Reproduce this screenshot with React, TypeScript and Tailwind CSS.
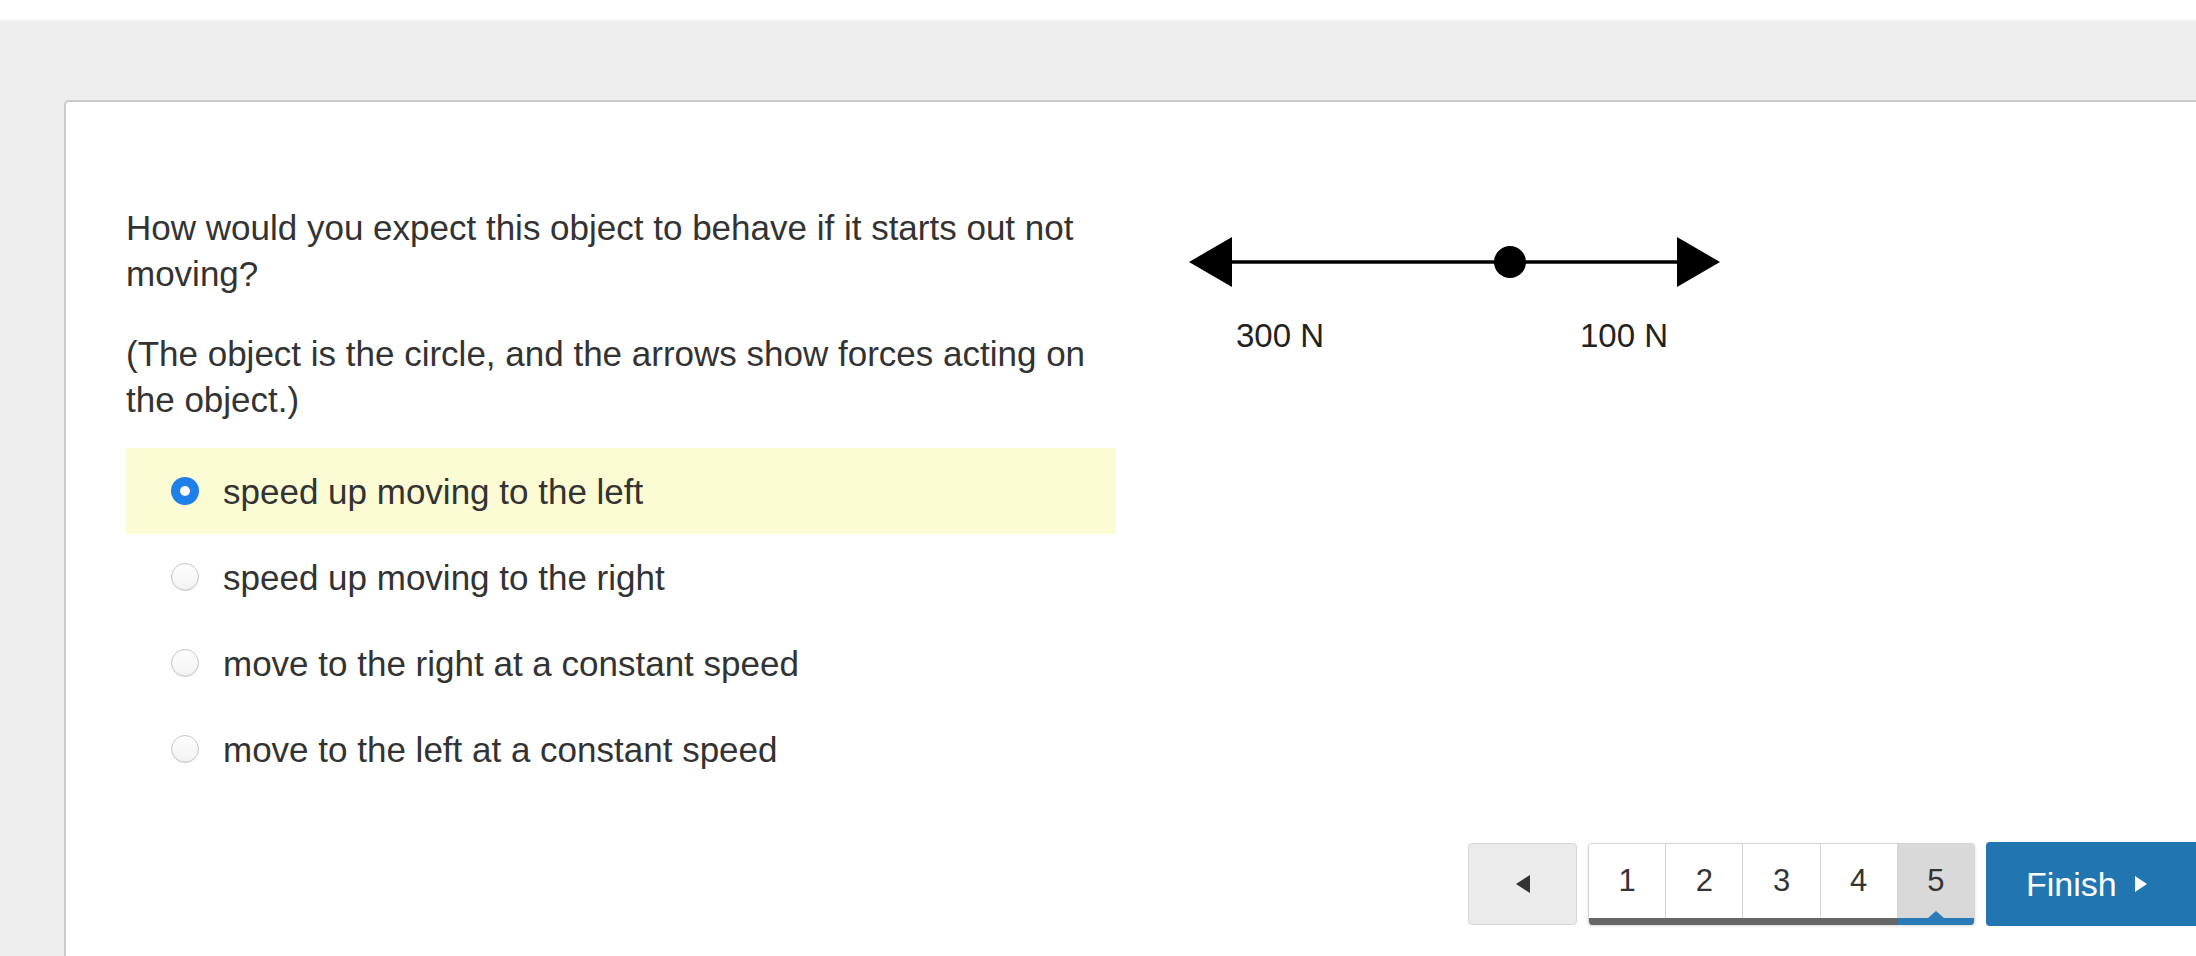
import React from "react";

const options = [
  "speed up moving to the left",
  "speed up moving to the right",
  "move to the right at a constant speed",
  "move to the left at a constant speed",
];

function Radio({ checked }: { checked: boolean }) {
  if (checked) {
    return (
      <span className="flex h-[28px] w-[28px] shrink-0 items-center justify-center rounded-full bg-[#1f80ea]">
        <span className="h-[10px] w-[10px] rounded-full bg-white" />
      </span>
    );
  }
  return (
    <span className="h-[28px] w-[28px] shrink-0 rounded-full border border-[#c6c6c6] bg-gradient-to-b from-white to-[#f2f2f2] shadow-[inset_0_-1px_1px_rgba(0,0,0,0.05)]" />
  );
}

function Diagram() {
  return (
    <svg width="560" height="140" viewBox="0 0 560 140" className="mt-[15px] shrink-0">
      <line x1="50" y1="42" x2="500" y2="42" stroke="#000" strokeWidth="3.5" />
      <polygon points="9,42 52,17 52,67" fill="#000" />
      <polygon points="540,42 497,17 497,67" fill="#000" />
      <circle cx="330" cy="42" r="16" fill="#000" />
      <text x="56" y="127" fontSize="33" fill="#222" fontFamily="'Liberation Sans', Arial, sans-serif">
        300 N
      </text>
      <text x="400" y="127" fontSize="33" fill="#222" fontFamily="'Liberation Sans', Arial, sans-serif">
        100 N
      </text>
    </svg>
  );
}

export default function App() {
  return (
    <div
      className="h-[956px] w-full overflow-hidden bg-[#eeeeee] text-[#333333]"
      style={{ fontFamily: "'Liberation Sans', Arial, Helvetica, sans-serif" }}
    >
      <div className="h-[21px] border-b-2 border-[#f6f6f6] bg-white" />
      <div className="ml-[64px] mt-[79px] h-[900px] w-[2180px] rounded-[5px] border-2 border-[#c9c9c9] bg-white pl-[60px] pr-[26px] pt-[103px]">
        <div className="flex items-start gap-[64px]">
          <div className="w-[990px] shrink-0">
            <p className="mb-[34px] text-[35px] leading-[46px]">
              How would you expect this object to behave if it starts out not moving?
            </p>
            <p className="mb-[25px] text-[35px] leading-[46px]">
              (The object is the circle, and the arrows show forces acting on the object.)
            </p>
            <div className="flex flex-col">
              {options.map((o, i) => (
                <div
                  key={o}
                  className={
                    "flex h-[86px] items-center gap-[24px] pl-[45px] " +
                    (i === 0 ? "bg-[#fcfcd4]" : "")
                  }
                >
                  <Radio checked={i === 0} />
                  <span className="text-[35px] leading-none">{o}</span>
                </div>
              ))}
            </div>
          </div>
          <Diagram />
        </div>

        <div className="mt-[50px] flex items-center justify-end gap-[11px]">
          <button className="flex h-[82px] w-[109px] items-center justify-center rounded-[4px] border border-[#d6d6d6] bg-[#ebebeb]">
            <svg width="14" height="18" viewBox="0 0 14 18">
              <polygon points="0,9 14,0 14,18" fill="#333" />
            </svg>
          </button>
          <div className="flex h-[82px] w-[387px] flex-col overflow-hidden rounded-[4px] border border-b-0 border-[#d6d6d6] shadow-[0_1px_3px_rgba(0,0,0,0.15)]">
            <div className="flex flex-1">
              {[1, 2, 3, 4, 5].map((n) => (
                <div
                  key={n}
                  className={
                    "relative flex flex-1 items-center justify-center text-[31px] text-[#333] " +
                    (n < 5 ? "border-r border-[#d6d6d6] bg-white" : "bg-[#d9d9d9]")
                  }
                >
                  {n}
                  {n === 5 && (
                    <div className="absolute bottom-0 left-1/2 h-0 w-0 -translate-x-1/2 border-x-[8px] border-b-[7px] border-x-transparent border-b-[#2a7bb8]" />
                  )}
                </div>
              ))}
            </div>
            <div className="flex h-[7px]">
              <div className="flex-[4] bg-[#666666]" />
              <div className="flex-1 bg-[#2a7bb8]" />
            </div>
          </div>
          <button className="flex h-[84px] w-[230px] items-center gap-[18px] rounded-[4px] bg-[#2176b1] pl-[40px] text-[34px] text-white">
            <span>Finish</span>
            <svg width="12" height="16" viewBox="0 0 12 16">
              <polygon points="12,8 0,0 0,16" fill="#fff" />
            </svg>
          </button>
        </div>
      </div>
    </div>
  );
}
